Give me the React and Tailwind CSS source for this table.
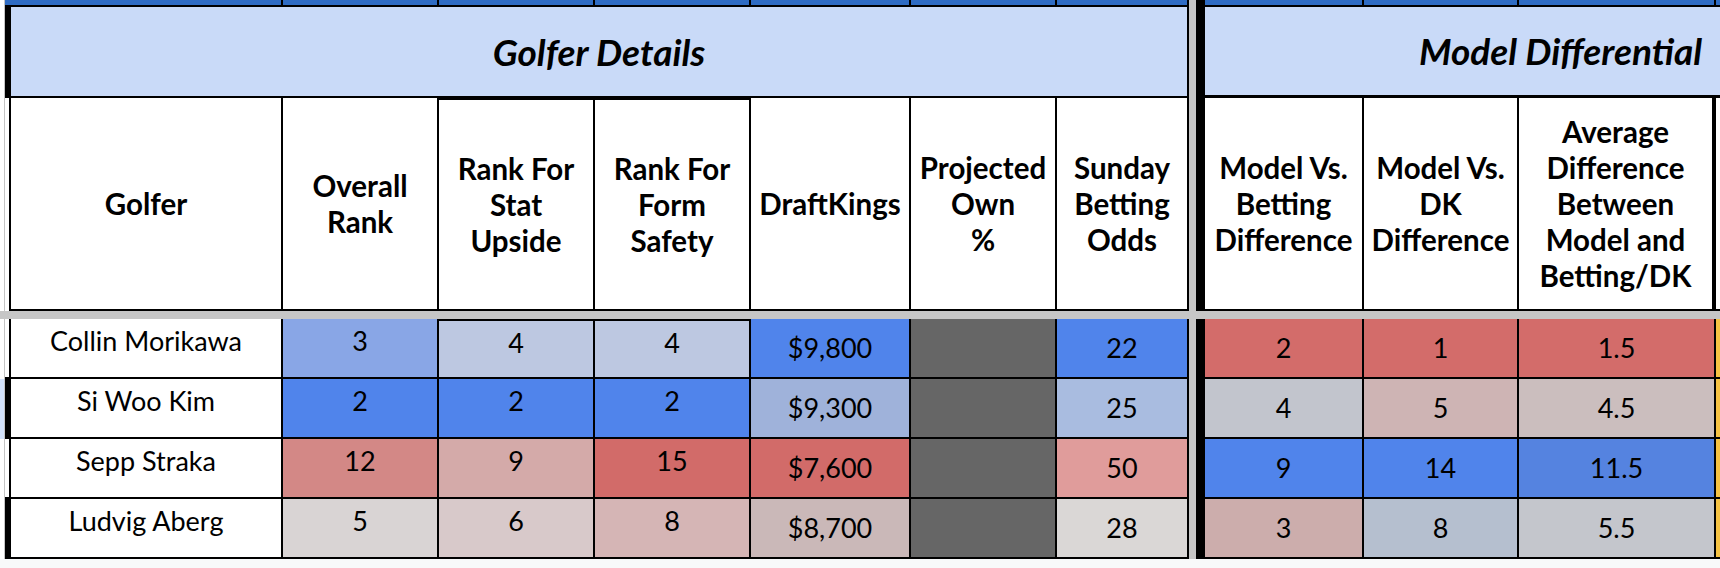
import React from 'react'

// frozen sheet view: two tables side by side, split by the grey freeze bar

// column widths incl. the 2px right rule
const T1 = ['w-[272px]', 'w-[156px]', 'w-[156px]', 'w-[156px]', 'w-[160px]', 'w-[146px]', 'w-[132px]']
const T2 = ['w-[159px]', 'w-[155px]', 'w-[197px]']

const HEAD1 = [
  ['Golfer'],
  ['Overall', 'Rank'],
  ['Rank For', 'Stat', 'Upside'],
  ['Rank For', 'Form', 'Safety'],
  ['DraftKings'],
  ['Projected', 'Own', '%'],
  ['Sunday', 'Betting', 'Odds'],
]
const HEAD2 = [
  ['Model Vs.', 'Betting', 'Difference'],
  ['Model Vs.', 'DK', 'Difference'],
  ['Average', 'Difference', 'Between', 'Model and', 'Betting/DK'],
]

const ROWS = [
  {
    golfer: 'Collin Morikawa', thick: false, gutter: 'bg-white',
    t1: [['3', 'bg-[#89a6e6]'], ['4', 'bg-[#bdc8e1]'], ['4', 'bg-[#bdc8e1]'], ['$9,800', 'bg-[#5084eb]'], ['', 'bg-[#666666]'], ['22', 'bg-[#5084eb]']],
    t2: [['2', 'bg-[#d36c6a]'], ['1', 'bg-[#d36c6a]'], ['1.5', 'bg-[#d36c6a]']],
  },
  {
    golfer: 'Si Woo Kim', thick: true, gutter: 'bg-[#d3e2fb]',
    t1: [['2', 'bg-[#5084eb]'], ['2', 'bg-[#5084eb]'], ['2', 'bg-[#5084eb]'], ['$9,300', 'bg-[#9fb2da]'], ['', 'bg-[#666666]'], ['25', 'bg-[#a9bce0]']],
    t2: [['4', 'bg-[#c2c5cd]'], ['5', 'bg-[#ceb4b4]'], ['4.5', 'bg-[#cbbebe]']],
  },
  {
    golfer: 'Sepp Straka', thick: false, gutter: 'bg-white',
    t1: [['12', 'bg-[#d38886]'], ['9', 'bg-[#d4aaa9]'], ['15', 'bg-[#d26b69]'], ['$7,600', 'bg-[#d26b69]'], ['', 'bg-[#666666]'], ['50', 'bg-[#e09c9b]']],
    t2: [['9', 'bg-[#5084eb]'], ['14', 'bg-[#5084eb]'], ['11.5', 'bg-[#5583e0]']],
  },
  {
    golfer: 'Ludvig Aberg', thick: true, gutter: 'bg-white',
    t1: [['5', 'bg-[#d9d4d4]'], ['6', 'bg-[#d8c9ca]'], ['8', 'bg-[#d5b5b5]'], ['$8,700', 'bg-[#cab8b8]'], ['', 'bg-[#666666]'], ['28', 'bg-[#dad7d6]']],
    t2: [['3', 'bg-[#ccadac]'], ['8', 'bg-[#b5bfcf]'], ['5.5', 'bg-[#c4c6cc]']],
  },
]

const Gutter = ({ bg = 'bg-white' }) => <div className={`w-[5px] shrink-0 border-r border-[#c4c4c4] ${bg}`} />
const Freeze = () => <div className="w-[7px] shrink-0 bg-[#c6c6c6]" />

const App = () => {
  return (
    <div className="w-[1720px] h-[568px] overflow-hidden bg-[#f8f9fa] font-['Lato',sans-serif] text-black">

      {/* blue strip from the row above */}
      <div className="flex h-[7px]">
        <Gutter />
        <div className="w-[6px] shrink-0 bg-[#2f6cc4] border-b-2 border-black" />
        {T1.map((w, i) => (
          <div key={i} className={`${w} shrink-0 bg-[#2f6cc4] border-r-2 border-b-2 border-black`} />
        ))}
        <Freeze />
        <div className="w-[9px] shrink-0 bg-black" />
        {T2.map((w, i) => (
          <div key={i} className={`${w} shrink-0 bg-[#2f6cc4] border-r-2 border-b-2 border-black`} />
        ))}
        <div className="w-[4px] shrink-0 bg-[#2f6cc4] border-b-2 border-black" />
      </div>

      {/* section titles */}
      <div className="flex h-[91px]">
        <Gutter />
        <div className="w-[6px] shrink-0 bg-black" />
        <div className="w-[1178px] shrink-0 flex items-center justify-center bg-[#c9daf8] border-r-2 border-b-2 border-black text-[37px] font-bold italic">
          Golfer Details
        </div>
        <Freeze />
        <div className="w-[9px] shrink-0 bg-black" />
        <div className="w-[515px] shrink-0 flex items-center justify-end pr-[18px] bg-[#c9daf8] border-b-[3px] border-black text-[37px] font-bold italic">
          Model Differential
        </div>
      </div>

      {/* column headers */}
      <div className="flex h-[213px] bg-white">
        <Gutter />
        <div className="w-[6px] shrink-0 bg-white border-r-2 border-black" />
        {T1.map((w, i) => (
          <div key={i} className={`${w} shrink-0 flex flex-col items-center justify-center border-r-2 border-b-2 border-black text-[29.5px] leading-[36px] font-bold text-center ${i === 2 || i === 3 ? 'border-t-2' : ''}`}>
            {HEAD1[i].map(line => <span key={line}>{line}</span>)}
          </div>
        ))}
        <Freeze />
        <div className="w-[9px] shrink-0 bg-black" />
        {T2.map((w, i) => (
          <div key={i} className={`${w} shrink-0 flex flex-col items-center justify-center border-r-2 border-b-2 border-black text-[29.5px] leading-[36px] font-bold text-center ${i === 2 ? 'border-r-4' : ''}`}>
            {HEAD2[i].map(line => <span key={line}>{line}</span>)}
          </div>
        ))}
        <div className="w-[4px] shrink-0 border-b-2 border-black bg-white" />
      </div>

      {/* freeze bar */}
      <div className="h-[8px] bg-[#c6c6c6]" />

      {ROWS.map((row, r) => (
        <div key={row.golfer} className="flex h-[60px] text-[27px] leading-[32px]">
          <Gutter bg={row.gutter} />
          <div className={`w-[6px] shrink-0 border-b-2 border-black ${row.thick ? 'bg-black' : 'bg-white border-r-2'}`} />
          <div className={`${T1[0]} shrink-0 bg-white border-r-2 border-b-2 border-black flex justify-center pt-[6px]`}>
            {row.golfer}
          </div>
          {row.t1.map(([v, bg], i) => (
            <div
              key={i}
              className={`${T1[i + 1]} shrink-0 ${bg} border-r-2 border-b-2 border-black flex justify-center ${i < 3 ? 'pt-[6px]' : 'items-center'} ${r === 0 && (i === 1 || i === 2) ? 'border-t-2' : ''}`}
            >
              {v}
            </div>
          ))}
          <Freeze />
          <div className="w-[9px] shrink-0 bg-black" />
          {row.t2.map(([v, bg], i) => (
            <div key={i} className={`${T2[i]} shrink-0 ${bg} border-r-2 border-b-2 border-black flex items-center justify-center`}>
              {v}
            </div>
          ))}
          <div className="w-[4px] shrink-0 bg-[#f6c343] border-b-2 border-black" />
        </div>
      ))}
    </div>
  )
}

export default App
